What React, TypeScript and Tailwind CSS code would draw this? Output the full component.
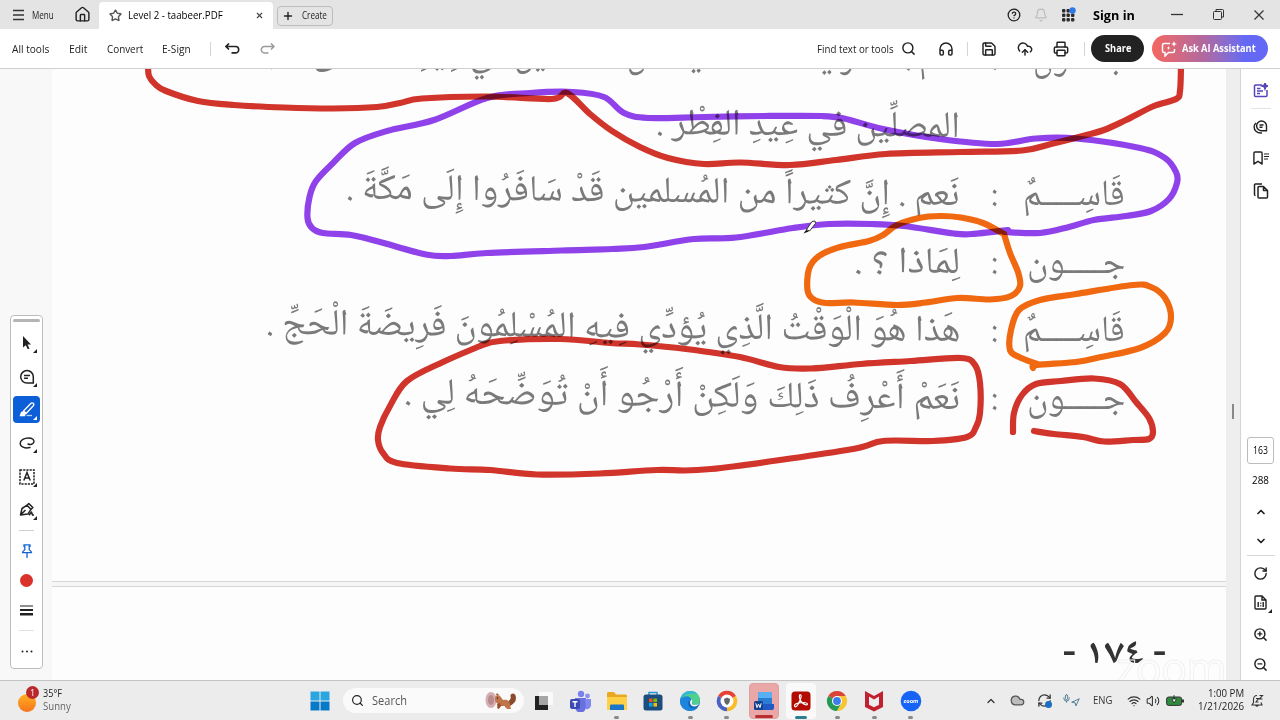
import { ReactNode, useLayoutEffect, useRef, useState } from "react";
import clsx from "clsx";
import {
  Bell,
  BookmarkIcon,
  ChevronDown,
  ChevronUp,
  CircleQuestionMark,
  Cloud,
  CloudUpload,
  Headphones,
  House,
  Mic,
  Navigation,
  Plus,
  Printer,
  RefreshCw,
  RotateCw,
  Save,
  Search,
  Star,
  Volume2,
  Wifi,
  X,
  ZoomIn,
  ZoomOut,
} from "lucide-react";

type Point = [number, number];

interface FitProps {
  className?: string;
  rtl?: boolean;
  children: ReactNode;
}

// Stretches one line of text to the width of its box.
const Fit = ({ className, rtl, children }: FitProps) => {
  const box = useRef<HTMLDivElement>(null);
  const line = useRef<HTMLSpanElement>(null);
  const [scale, setScale] = useState(1);

  useLayoutEffect(() => {
    if (box.current && line.current) {
      setScale(box.current.clientWidth / line.current.offsetWidth);
    }
  }, [children]);

  return (
    <div ref={box} dir={rtl ? "rtl" : "ltr"} className={clsx("flex shrink-0", className)}>
      <span
        ref={line}
        className={clsx("shrink-0 whitespace-nowrap", rtl ? "origin-right" : "origin-left")}
        style={{ transform: `scaleX(${scale})` }}
      >
        {children}
      </span>
    </div>
  );
};

const smooth = (pts: Point[]) => {
  let d = `M${pts[0][0]} ${pts[0][1]}`;
  for (let i = 0; i < pts.length - 1; i++) {
    const a = pts[Math.max(i - 1, 0)];
    const b = pts[i];
    const c = pts[i + 1];
    const e = pts[Math.min(i + 2, pts.length - 1)];
    d += `C${b[0] + (c[0] - a[0]) / 6} ${b[1] + (c[1] - a[1]) / 6} ${c[0] - (e[0] - b[0]) / 6} ${c[1] - (e[1] - b[1]) / 6} ${c[0]} ${c[1]}`;
  }
  return d;
};

const RED = "#d2342a";
const PURPLE = "#9142ec";
const ORANGE = "#f26a10";

const strokes: { color: string; points: Point[] }[] = [
  {
    color: RED,
    points: [
      [148, 66], [149, 76], [155, 84], [166, 91], [198, 101], [234, 105], [284, 107.5], [333, 108.5], [377, 107],
      [400, 103], [422, 98.5], [487, 96.5], [552, 99], [567, 93], [590, 114], [612, 131], [640, 147], [668, 158],
      [704, 164], [740, 162.5], [790, 165], [836, 160], [886, 154], [961, 152], [1022, 150.5], [1051, 144],
      [1079, 137], [1104, 130], [1126, 120], [1154, 106], [1176, 99], [1180, 91], [1181, 66],
    ],
  },
  {
    color: PURPLE,
    points: [
      [1008, 230], [972, 234], [954, 233.5], [904, 226], [872, 224], [829, 224], [793, 228], [736, 237.5], [694, 239],
      [644, 247], [612, 249], [562, 250.5], [487, 253], [451, 256], [426, 254.5], [380, 242], [351, 235], [323, 233],
      [312, 228], [307.5, 218], [309.5, 197], [316, 181], [333, 163], [355, 143], [387, 131], [434, 120], [487, 98],
      [530, 93], [573, 92], [604, 97], [624, 113], [648, 118], [704, 117], [765, 116], [822, 116], [844, 118.5],
      [883, 129], [940, 139], [997, 144], [1036, 138.5], [1076, 138.5], [1140, 148], [1165, 158], [1176, 172],
      [1177, 183], [1169, 199], [1151, 211], [1126, 216], [1094, 220], [1069, 227], [1040, 233], [1004, 232],
    ],
  },
  {
    color: ORANGE,
    points: [
      [1004, 234], [983, 223], [961, 217.5], [940, 216], [919, 218], [897, 225], [883, 235], [869, 241], [840, 247],
      [819, 256], [809, 269], [807.5, 290], [813, 299], [826, 303], [854, 302.5], [897, 305], [926, 302.5],
      [958, 298], [990, 299.5], [1011, 296], [1020, 286], [1018, 272], [1010, 253], [1004, 234],
    ],
  },
  {
    color: ORANGE,
    points: [
      [1037, 364], [1019, 357], [1010, 350], [1011, 330], [1019, 310], [1040, 300], [1076, 294], [1133, 285],
      [1151, 287], [1165, 298], [1171, 317], [1165, 333], [1140, 348], [1101, 357], [1076, 362], [1037, 365],
      [1033, 368],
    ],
  },
  {
    color: RED,
    points: [
      [1013, 432], [1014, 413], [1022, 395], [1036, 384], [1061, 381], [1094, 378.5], [1120, 384], [1136, 402],
      [1149, 418], [1153, 432], [1149, 439], [1133, 440], [1104, 441.5], [1083, 437], [1054, 434], [1034, 431],
    ],
  },
  {
    color: RED,
    points: [
      [480, 346], [500, 341], [560, 339], [610, 343], [640, 344.5], [686, 349], [740, 357], [779, 367], [811, 368.5],
      [861, 364], [911, 361], [961, 358], [975, 365], [980, 383], [980, 413], [976, 427], [967, 437], [933, 441],
      [883, 441], [847, 450], [711, 469], [657, 470], [600, 473.5], [537, 474.5], [490, 470], [450, 468.5],
      [397, 463], [383, 453], [378, 440], [380, 427], [390, 406], [407, 381], [443, 362], [480, 346],
    ],
  },
];

const Ink = () => (
  <svg viewBox="0 69 1240 611" className="absolute inset-0 h-[611px] w-[1240px] mix-blend-multiply" fill="none">
    {strokes.map((s, i) => (
      <path
        key={i}
        d={smooth(s.points)}
        stroke={s.color}
        strokeWidth={6.2}
        strokeLinecap="round"
        strokeLinejoin="round"
        className="mix-blend-multiply"
      />
    ))}
  </svg>
);

const Cursor = () => (
  <svg viewBox="0 0 16 16" className="absolute top-[150px] left-[802px] h-4 w-4">
    <path d="m4.500 10.500 5.500-8 3-.5.500 2.500-6 7.500z" fill="#fff" stroke="#333" strokeWidth={1} />
    <path d="m1.500 14.500 2.800-3.800 2.500 1.800z" fill="#111" />
  </svg>
);

interface Line {
  speaker?: string;
  text: string;
  width: string;
  speakerWidth?: string;
}

const lines: Line[] = [
  {
    speaker: "جـــــون",
    speakerWidth: "w-[92px]",
    text: "نَعم . لَقَدْ رأيتُ عدداً قليلاً من المُسلمين في عِيدِ الأضحى المبارك",
    width: "w-[734px]",
  },
  { text: "المصلِّين في عِيدِ الفِطْر .", width: "w-[304px]" },
  {
    speaker: "قَاسِـــــمٌ",
    speakerWidth: "w-[102px]",
    text: "نَعم . إِنَّ كثيراً من المُسلمين قَدْ سَافَرُوا إِلَى مَكَّةَ .",
    width: "w-[614px]",
  },
  { speaker: "جـــــون", speakerWidth: "w-[98px]", text: "لِمَاذا ؟ .", width: "w-[106px]" },
  {
    speaker: "قَاسِـــــمٌ",
    speakerWidth: "w-[102px]",
    text: "هَذا هُوَ الْوَقْتُ الَّذِي يُؤدِّي فِيهِ المُسْلِمُونَ فَرِيضَةَ الْحَجِّ .",
    width: "w-[694px]",
  },
  {
    speaker: "جـــــون",
    speakerWidth: "w-[98px]",
    text: "نَعَمْ أَعْرِفُ ذَلِكَ وَلَكِنْ أَرْجُو أَنْ تُوَضِّحَهُ لِي  .",
    width: "w-[556px]",
  },
];

const Manuscript = () => (
  <div className="flex h-[513px] flex-col overflow-hidden border-b border-[#d6d6d6] bg-[#fdfdfd]">
    <div
      dir="rtl"
      className="-mt-[42px] flex flex-col pr-[101px] font-['Noto_Naskh_Arabic','Amiri','Scheherazade_New','DejaVu_Sans',serif] text-[37px] leading-[68px] text-[#7a7a7a]"
    >
      {lines.map((line, i) => (
        <div key={i} className="flex h-[68px]">
          <div className="w-[127px] shrink-0">
            {line.speaker && (
              <Fit rtl className={line.speakerWidth}>
                {line.speaker}
              </Fit>
            )}
          </div>
          <div className="w-[38px] shrink-0 text-[34px]">{line.speaker && ":"}</div>
          <Fit rtl className={clsx("origin-right rotate-[0.6deg]", line.width)}>
            {line.text}
          </Fit>
        </div>
      ))}
    </div>
  </div>
);

const Divider = () => <div className="h-[14px] w-px shrink-0 bg-[#d4d4d4]" />;

const Cell = ({ className, children }: { className?: string; children?: ReactNode }) => (
  <div className={clsx("relative flex shrink-0 items-center justify-center", className)}>{children}</div>
);

const TitleBar = () => (
  <div className="flex h-[29px] items-center bg-[#e4e4e4] text-[11px] text-[#222]">
    <div className="flex w-[74px] items-center gap-2 pl-[13px]">
      <svg className="h-3 w-[11px]" stroke="#333" strokeWidth="1.4">
        <path d="M0 1.5h11M0 6h11M0 10.500h11" />
      </svg>
      <Fit className="mt-px w-[22px]">Menu</Fit>
    </div>
    <House className="h-[17px] w-[17px] text-[#222]" strokeWidth={2} />
    <div className="mt-[2px] ml-2 flex h-[27px] w-[174px] items-center rounded-t bg-white pl-[10px]">
      <Star className="h-[13px] w-[13px] text-[#555]" strokeWidth={2.6} />
      <Fit className="ml-[6px] w-[95px] text-black">Level 2 - taabeer.PDF</Fit>
      <X className="ml-[32px] h-[9px] w-[9px] text-[#444]" strokeWidth={3} />
    </div>
    <div className="mt-[2px] ml-1 flex h-[20px] w-[56px] items-center rounded border border-[#bdbdbd] pl-[4px]">
      <Plus className="h-[12px] w-[12px] text-[#222]" strokeWidth={2.8} />
      <Fit className="ml-[8px] w-[25px]">Create</Fit>
    </div>
    <div className="ml-auto flex items-center">
      <Cell className="w-[27px]">
        <CircleQuestionMark className="h-[14px] w-[14px] text-[#222]" strokeWidth={2.2} />
      </Cell>
      <Cell className="w-[27px]">
        <Bell className="h-[14px] w-[14px] text-[#bcbcbc]" />
      </Cell>
      <Cell className="w-[27px]">
        <svg className="h-4 w-4" viewBox="0 0 16 16" fill="#2b2b2b">
          {[2, 6.5, 11].map((y) =>
            [2, 6.5, 11].map((x) => <rect key={`${x}-${y}`} x={x} y={y} width="3.4" height="3.4" rx="1" />)
          )}
          <circle cx="12.5" cy="3.5" r="3.2" fill="#2c78e4" />
        </svg>
      </Cell>
      <Fit className="mt-[2px] ml-[12px] w-[42px] text-[13px] font-bold text-black">Sign in</Fit>
      <svg className="ml-[36px] h-3 w-3" stroke="#333" strokeWidth="1.3">
        <path d="M0 5.5h12" />
      </svg>
      <svg className="ml-[30px] h-[11px] w-[11px]" viewBox="0 0 11 11" fill="none" stroke="#333">
        <rect x=".5" y="2.5" width="8" height="8" rx="1" />
        <path d="M3 2V.5h6.500a1 1 0 0 1 1 1V8H9" />
      </svg>
      <svg className="mr-[16px] ml-[30px] h-[10px] w-[10px]" stroke="#333" strokeWidth="1.2">
        <path d="m.5.5 9 9m0-9-9 9" />
      </svg>
    </div>
  </div>
);

const SparkleBox = ({ className }: { className?: string }) => (
  <svg className={className} viewBox="0 0 16 16" fill="none" stroke="currentColor" strokeWidth="1.5">
    <path d="M9 2.500H3A1.500 1.500 0 0 0 1.500 4v6A1.500 1.500 0 0 0 3 11.500h1V15l3.500-3.500H12a1.500 1.500 0 0 0 1.500-1.500V8" />
    <path
      d="m13 0 .8 2.200L16 3l-2.200.8L13 6l-.8-2.200L10 3l2.200-.8zM7.500 5l.6 1.400 1.400.6-1.400.6-.6 1.400-.6-1.400L5.500 7l1.400-.6z"
      fill="currentColor"
      stroke="none"
    />
  </svg>
);

const Toolbar = () => (
  <div className="flex h-10 items-center border-b border-[#d0d0d0] bg-white pl-3 text-[11.5px] text-[#222]">
    <Fit className="w-[37px]">All tools</Fit>
    <Fit className="ml-5 w-[18px]">Edit</Fit>
    <Fit className="ml-5 w-[36px]">Convert</Fit>
    <Fit className="mr-[19px] ml-[19px] w-[29px]">E-Sign</Fit>
    <Divider />
    <svg className="ml-[14px] h-[11px] w-[15px]" viewBox="0 0 15 11" fill="none" stroke="currentColor" strokeWidth="1.6">
      <path d="M4 .5 1 3.500l3 3M1 3.500h9.500a3.200 3.200 0 0 1 0 6.400H6.500" />
    </svg>
    <svg
      className="ml-[20px] h-[11px] w-[15px] text-[#9a9a9a]"
      viewBox="0 0 15 11"
      fill="none"
      stroke="currentColor"
      strokeWidth="1.5"
    >
      <path d="m11 .5 3 3-3 3M14 3.500H4.500a3.200 3.200 0 0 0 0 6.400h4" />
    </svg>
    <div className="ml-auto flex items-center">
      <Fit className="w-[77px]">Find text or tools</Fit>
      <Search className="ml-[7px] h-[15px] w-[15px]" strokeWidth={2.3} />
      <Headphones className="ml-[22px] h-4 w-4" strokeWidth={2.2} />
      <Cell className="w-[27px]">
        <Divider />
      </Cell>
      <Save className="h-4 w-4" strokeWidth={2.2} />
      <CloudUpload className="ml-[20px] h-4 w-4" strokeWidth={2.2} />
      <Printer className="ml-[20px] h-4 w-4" strokeWidth={2.2} />
      <Cell className="w-[22px] pl-2">
        <Divider />
      </Cell>
      <div className="flex h-[27px] w-[53px] items-center justify-center rounded-full bg-[#222] text-[11px] font-bold text-white">
        <Fit className="w-[26px]">Share</Fit>
      </div>
      <div className="mr-3 ml-[8px] flex h-[27px] w-[116px] items-center rounded-full bg-linear-to-r from-[#f5665e] via-[#b0689f] via-45% to-[#6468f5] to-80% pl-[9px] text-[11px] font-bold text-white">
        <SparkleBox className="h-4 w-4" />
        <Fit className="ml-[5px] w-[74px]">Ask AI Assistant</Fit>
      </div>
    </div>
  </div>
);

const Corner = ({ white }: { white?: boolean }) => (
  <svg className="absolute right-[3px] bottom-[3px] h-1 w-1" fill={white ? "#fff" : "#222"}>
    <path d="M4 0v4H0z" />
  </svg>
);

const Palette = () => (
  <div className="absolute top-[246px] left-[10px] flex h-[354px] w-[33px] flex-col items-center rounded border border-[#bcbcbc] bg-white pt-[3px]">
    <div className="h-[3px] w-[27px] rounded-sm bg-[#b4b4b4]" />
    <Cell className="mt-[7px] h-[27px] w-[27px]">
      <svg className="h-[14px] w-[10px]" fill="#222">
        <path d="m1 0 8 8.500H5.500l2 4-1.700.8-2-4L1 11.500z" />
      </svg>
      <Corner />
    </Cell>
    <Cell className="mt-[7px] h-[27px] w-[27px]">
      <svg className="h-4 w-4" viewBox="0 0 16 16" fill="none" stroke="#222" strokeWidth="1.5">
        <path d="M8 1.500a6.300 6.300 0 1 0 0 12.600h6.300V7.800A6.300 6.300 0 0 0 8 1.500zM5 6.500h6M5 9.300h4" />
      </svg>
      <Corner />
    </Cell>
    <Cell className="mt-[6px] h-[27px] w-[27px] rounded-sm bg-[#0d5fd8]">
      <svg className="h-4 w-4" viewBox="0 0 16 16" fill="none" stroke="#fff" strokeWidth="1.3">
        <path d="m4.500 9 7.300-7.500a1.500 1.500 0 0 1 2.500 2.200L7.300 11.300z" />
        <path d="m1.500 13.500 1-3 2-.8 1.800 1.800-.8 2z" fill="#fff" />
        <path d="M7.500 13.500H13" opacity=".7" />
      </svg>
      <Corner white />
    </Cell>
    <Cell className="mt-[6px] h-[27px] w-[27px]">
      <svg className="h-4 w-4" viewBox="0 0 16 16" fill="none" stroke="#222" strokeWidth="1.4" strokeLinecap="round">
        <path d="M11 12.500C5.500 14 1.200 11.500 1.200 8.500 1.200 5 5.500 3 9.500 3s6 2 5.300 4.200c-.6 2-3.600 2.900-5.800 1.800" />
      </svg>
      <Corner />
    </Cell>
    <Cell className="mt-[7px] h-[27px] w-[27px]">
      <svg className="h-4 w-4" viewBox="0 0 16 16" fill="none" stroke="#222" strokeWidth="1.5">
        <rect x="1" y="1" width="14" height="14" strokeDasharray="2.200 1" />
        <path d="m4.800 11.500 3.200-8 3.200 8M6 9h4" />
      </svg>
      <Corner />
    </Cell>
    <Cell className="mt-[6px] h-[27px] w-[27px]">
      <svg className="h-4 w-4" viewBox="0 0 16 16" fill="none" stroke="#222" strokeWidth="1.5" strokeLinejoin="round">
        <path d="M1.500 13 3 6.500l5-3.300 4 4.200-3.200 4.700zM1.500 13l5-5M8 3.200l1.800-1.700 4 4L12 7.400M10 13.300l2.500-3.300 1 3h1.500" />
      </svg>
      <Corner />
    </Cell>
    <div className="mt-[7px] h-px w-[15px] bg-[#d0d0d0]" />
    <svg className="mt-[13px] h-[14px] w-3" viewBox="0 0 12 14" fill="none" stroke="#1565d0" strokeWidth="1.3">
      <path d="M3 .8h6v1.500H8.200v3.200c0 1 2.300 1 2.300 3.200h-9c0-2.200 2.300-2.200 2.300-3.200V2.300H3zM6 8.700V14" />
    </svg>
    <div className="mt-[16px] h-[13px] w-[13px] rounded-full bg-[#d9322a]" />
    <svg className="mt-[17px] h-3 w-[13px]" fill="#222">
      <path d="M0 1.500h13v1H0zM0 5h13v2H0zM0 9h13v2.500H0z" />
    </svg>
    <div className="mt-[14px] h-px w-[15px] bg-[#e0e0e0]" />
    <svg className="mt-[19px] h-[3px] w-3" fill="#222">
      <circle cx="1.5" cy="1.5" r="1" />
      <circle cx="6" cy="1.5" r="1" />
      <circle cx="10.5" cy="1.5" r="1" />
    </svg>
  </div>
);

const Rail = () => (
  <div className="flex w-[40px] shrink-0 flex-col items-center border-l border-[#d4d4d4] bg-white text-[#222]">
    <svg
      className="mt-[14px] h-[15px] w-[15px] text-[#5346b8]"
      viewBox="0 0 15 15"
      fill="none"
      stroke="currentColor"
      strokeWidth="1.5"
    >
      <path d="M9 2H2.500a1 1 0 0 0-1 1v9.500a1 1 0 0 0 1 1h10.500a1 1 0 0 0 1-1V7M4 5.500h3.500M4 8h6M4 10.500h3" />
      <path d="m12 0 .8 2.200L15 3l-2.200.8L12 6l-.8-2.200L9 3l2.200-.8z" fill="currentColor" />
    </svg>
    <div className="mt-[10px] h-px w-5 bg-[#e2e2e2]" />
    <svg
      className="mt-[11px] h-[14px] w-[15px]"
      viewBox="0 0 15 14"
      fill="none"
      stroke="currentColor"
      strokeWidth="1.4"
    >
      <path d="M8.500 1a4.800 4.800 0 0 0 0 9.800h5V6A5 5 0 0 0 8.500 1zM6.500 5h4M6.500 7.200h3M3 3C.5 5 .5 9 3 11.300c1.500 1.500 3.500 1.900 6 1.700" />
    </svg>
    <div className="mt-[16px] flex">
      <BookmarkIcon className="-ml-[2px] h-4 w-[14px]" strokeWidth={2.4} preserveAspectRatio="none" />
      <svg className="mt-[3px] -ml-[1px] h-[8px] w-[5px]" stroke="currentColor" strokeWidth="1.2">
        <path d="M0 1h5M0 3.500h5M0 6h4" />
      </svg>
    </div>
    <svg
      className="mt-[17px] h-4 w-4"
      viewBox="0 0 16 16"
      fill="none"
      stroke="currentColor"
      strokeWidth="1.5"
      strokeLinejoin="round"
    >
      <path d="M5 4.500a1 1 0 0 1 1-1h4.500l4 4V14a1 1 0 0 1-1 1H6a1 1 0 0 1-1-1zM10.500 3.500v4h4M2.500 12.500A1 1 0 0 1 1.500 11.500V2a1 1 0 0 1 1-1H9" />
    </svg>
    <div className="mt-[238px] flex h-[27px] w-[27px] items-center justify-center rounded-[3px] border border-[#bcbcbc]">
      <Fit className="w-[15px] text-[11px] text-black">163</Fit>
    </div>
    <Fit className="mt-[8px] w-[17px] text-[11px] text-black">288</Fit>
    <ChevronUp className="mt-[17px] h-3 w-3" strokeWidth={3.5} />
    <ChevronDown className="mt-[17px] h-3 w-3" strokeWidth={3.5} />
    <div className="mt-[8px] h-px w-7 bg-[#d8d8d8]" />
    <RotateCw className="mt-[10px] h-[15px] w-[15px]" strokeWidth={2.3} />
    <Cell className="mt-[12px] h-[20px] w-[23px]">
      <svg className="h-[15px] w-[13px]" viewBox="0 0 13 15" fill="none" stroke="currentColor" strokeWidth="1.4">
        <path d="M1 2a1 1 0 0 1 1-1h6l4 4v8a1 1 0 0 1-1 1H2a1 1 0 0 1-1-1zM8 1v4h4M4.200 7v5M9.200 7v5M6.300 8.200h1M6.300 10.800h1" />
      </svg>
      <svg className="absolute right-0 bottom-0 h-1 w-1" fill="#222">
        <path d="M4 0v4H0z" />
      </svg>
    </Cell>
    <ZoomIn className="mt-[14px] h-[15px] w-[15px]" strokeWidth={2.3} />
    <ZoomOut className="mt-[15px] h-[15px] w-[15px]" strokeWidth={2.3} />
  </div>
);

const TaskIcon = ({ active, tile, children }: { active?: string; tile?: string; children: ReactNode }) => (
  <div className={clsx("relative flex h-[36px] w-[30px] shrink-0 items-center justify-center rounded", tile)}>
    <svg className="h-[22px] w-[22px]" viewBox="0 0 22 22">
      {children}
    </svg>
    {active && <div className={clsx("absolute bottom-0 h-[3px] rounded-full", active)} />}
  </div>
);

const DOT = "w-[5px] bg-[#8a8a8a]";

const Taskbar = () => (
  <div className="flex h-10 items-center border-t border-[#c4c4c4] bg-[#ececec] text-[11px] text-[#444]">
    <div className="relative ml-[18px] h-[27px] w-[22px]">
      <div className="absolute bottom-[2px] h-[18px] w-[18px] rounded-full bg-linear-to-b from-[#ffb020] to-[#f4731c]" />
      <div className="absolute -top-[1px] left-[8px] flex h-[13px] w-[13px] items-center justify-center rounded-full bg-[#b9292b] text-[9px] text-white">
        1
      </div>
    </div>
    <div className="-mt-[3px] ml-[3px] flex w-[267px] flex-col leading-[13px]">
      <Fit className="w-[19px] text-[#222]">35°F</Fit>
      <Fit className="w-[28px] text-[#666]">Sunny</Fit>
    </div>
    <svg className="h-[20px] w-[20px]" viewBox="0 0 20 20">
      <path d="M.5.5h9v9h-9zM10.500.5h9v9h-9z" fill="#2ba5e0" />
      <path d="M.5 10.500h9v9h-9zM10.500 10.500h9v9h-9z" fill="#0878c9" />
    </svg>
    <div className="ml-[13px] flex h-[25px] w-[181px] items-center rounded-full bg-[#fafafa] pl-[8px]">
      <Search className="h-[13px] w-[13px] text-[#222]" strokeWidth={2.2} />
      <Fit className="ml-[8px] w-[35px] text-[12px] text-[#555]">Search</Fit>
      <svg className="ml-[78px] h-[19px] w-8" viewBox="0 0 32 19">
        <ellipse cx="6" cy="9" rx="5.5" ry="8" fill="#d4aeb0" />
        <ellipse cx="6" cy="9" rx="3" ry="5" fill="#b98a8e" />
        <path d="M22 14c3-2 8-4 6-9" stroke="#8a4a2e" strokeWidth="5" fill="none" strokeLinecap="round" />
        <path d="M10 8c0-4 3-5 5-3l3 4c4-1 7 1 7 5l1 4h-4l-2-3h-4l-2 3-2-1 1-4c-2-1-3-3-3-5z" fill="#c0764a" />
        <path d="m11 4 1-2 2 2zM12 13l3-1 1 3-3 3z" fill="#96522f" />
        <circle cx="12.5" cy="7" r=".7" fill="#222" />
      </svg>
    </div>
    <div className="ml-[4px] flex gap-[6.8px]">
      <TaskIcon>
        <path d="M7 2h14v13H7z" fill="#fafafa" />
        <path d="M3 6h4v9h9v5H3z" fill="#222" />
        <path d="M7 6h9v9H7z" fill="#a6a6a6" />
      </TaskIcon>
      <TaskIcon>
        <circle cx="12" cy="4" r="3.2" fill="#7b83eb" />
        <circle cx="18.5" cy="6" r="2.4" fill="#8b91ef" />
        <path d="M6 8h11v9a5 5 0 0 1-11 0z" fill="#6a6fe0" />
        <path d="M16 9h6v6a4 4 0 0 1-5 4z" fill="#8289ee" />
        <rect x="1" y="9" width="10" height="10" rx="2" fill="#3b49b5" />
        <path d="M3.500 11.700h5M6 11.700V17" stroke="#fff" strokeWidth="1.4" />
      </TaskIcon>
      <TaskIcon active={DOT}>
        <path d="M1 3.500C1 2 2 2 3 2h5l2 2.500h9.500a1.500 1.500 0 0 1 1.500 1.500v14H1z" fill="#e9a820" />
        <path d="M1 7h20v13H1z" fill="#ffcf45" />
        <path d="M4 15.500a1 1 0 0 1 1-1h12a1 1 0 0 1 1 1V20H4z" fill="#1976c8" />
      </TaskIcon>
      <TaskIcon>
        <path d="M7 5V2.500h8V5" stroke="#2493d1" strokeWidth="1.5" fill="none" />
        <rect x="1.5" y="4.5" width="19" height="16" rx="2.5" fill="#1b4d7e" />
        <path d="M7 8.500h3.600v3.600H7z" fill="#f25022" />
        <path d="M11.400 8.500H15v3.600h-3.600z" fill="#7fba00" />
        <path d="M7 13h3.600v3.600H7z" fill="#00a4ef" />
        <path d="M11.400 13H15v3.600h-3.600z" fill="#ffb900" />
      </TaskIcon>
      <TaskIcon active={DOT}>
        <circle cx="11" cy="11" r="10" fill="#1265b8" />
        <path d="M1.200 10C2 4.500 6.500 1 11.500 1c5.500 0 9.500 4.500 9.500 9 0 3-2.300 5-5.500 5-2 0-2.800-.8-2.300-1.800C15 10 9 4.500 1.200 10z" fill="#4fd08c" />
        <path d="M1.200 10C2 4.500 6.500 1 11.500 1c3 0 5.500 1.300 7 3C13 2.500 5 4 1.200 10z" fill="#35b8d8" />
        <path d="M1.300 9C5 5 12.500 5.500 12 10c-2.500.5-3.500 3-2.500 5.500 1.200 3 5 4 9.500 2C16 21 11.500 21.500 8 20.500 3 19 .3 14 1.300 9z" fill="#1c86dc" />
        <path d="M12.500 9.500c1.500 1.500.8 2.800.5 3.600-.4 1.200 1 1.900 2.500 1.900 2 0 3.800-.8 4.800-2-.5 2-2.800 3.800-5.300 3.500-3.500-.3-5.500-4.500-2.500-7z" fill="#eef5f7" />
      </TaskIcon>
      <TaskIcon active={DOT}>
        <path d="M11 11 2 6a10.300 10.300 0 0 1 18 0z" fill="#e84235" />
        <path d="M11 11 20 6a10.300 10.300 0 0 1-9 15.300z" fill="#fbbc28" />
        <path d="M11 11v10.300A10.300 10.300 0 0 1 2 6z" fill="#4a62c4" />
        <circle cx="11" cy="11" r="6.5" fill="#fff" />
        <path d="M11 7.500 14 9c0 3-1 5-3 6-2-1-3-3-3-6z" fill="#666" />
      </TaskIcon>
      <TaskIcon tile="bg-[#e9a7a7] border border-[#dfa0a0]" active="w-[18px] bg-[#b92e2e]">
        <rect x="5" y="2" width="14" height="18" rx="2" fill="#2b7cd3" />
        <path d="M5 4a2 2 0 0 1 2-2h10a2 2 0 0 1 2 2v4H5z" fill="#58b0f2" />
        <path d="M5 14h16v4a2 2 0 0 1-2 2H5z" fill="#2159c4" />
        <rect x="1" y="11" width="9" height="9" rx="1.5" fill="#153f8f" />
        <path d="m2.800 13.300 1.200 4.300 1.500-3.500 1.500 3.500 1.200-4.300" stroke="#fff" fill="none" />
      </TaskIcon>
      <TaskIcon tile="bg-[#f9f9f9]" active="w-[12px] bg-[#2f7f92]">
        <rect x="1.5" y="1.5" width="19" height="19" rx="3.5" fill="#b30b00" />
        <path
          d="M4.500 15.800c0-1.500 3.500-2.800 7-3.100 3-.3 6 0 6 1.400 0 1.700-3.500.5-5.500-1.600-2-2-3-5.500-2.500-7 .4-1.200 1.800-1 1.700.8C11 9 7.500 16.800 5.500 16.800c-.6 0-1-.4-1-1z"
          stroke="#fff"
          strokeWidth="1.2"
          fill="none"
        />
      </TaskIcon>
      <TaskIcon active={DOT}>
        <path d="M11 11 2.300 6A10 10 0 0 1 19.700 6z" fill="#dc4437" />
        <path d="M2.300 6A10 10 0 0 0 11 21l4.300-7.500L11 11z" fill="#239a56" />
        <path d="M19.700 6A10 10 0 0 1 11 21l4.300-7.500L11 6z" fill="#f9c431" />
        <circle cx="11" cy="11" r="5" fill="#fff" />
        <circle cx="11" cy="11" r="3.9" fill="#3b7ded" />
      </TaskIcon>
      <TaskIcon active={DOT}>
        <path d="m2 1 9 5 9-5v16l-9 4.500L2 17z" fill="#c0202f" />
        <path d="m6 6.500 5 3 5-3v8.300l-5 2.500-5-2.500z" fill="#ececec" />
      </TaskIcon>
      <TaskIcon active={DOT}>
        <circle cx="11" cy="11" r="10.3" fill="#1664f5" />
        <text x="11" y="13" textAnchor="middle" fontSize="5.5" fontWeight="700" fill="#fff">
          zoom
        </text>
      </TaskIcon>
    </div>
    <div className="ml-auto flex items-center">
      <ChevronUp className="h-[12px] w-[12px] text-[#333]" strokeWidth={2.5} />
      <Cloud className="ml-[13px] h-[15px] w-[15px] fill-[#bdbdbd] text-[#555]" />
      <Cell className="ml-[12px] h-[15px] w-[15px]">
        <RefreshCw className="h-[15px] w-[15px] text-[#333]" strokeWidth={2} />
        <div className="absolute right-0 bottom-0 h-[7px] w-[7px] rounded-full bg-[#1a6fc4]" />
      </Cell>
      <Mic className="ml-[10px] h-[11px] w-[9px] -translate-y-[2px] text-[#4b7890]" strokeWidth={2.5} />
      <Navigation className="h-[9px] w-[9px] translate-y-[2px] text-[#4b7890]" strokeWidth={2.5} />
      <Fit className="ml-[13px] w-[19px] text-[#333]">ENG</Fit>
      <Wifi className="ml-[15px] h-[14px] w-[14px] text-[#333]" strokeWidth={2} />
      <Volume2 className="ml-[5px] h-[14px] w-[14px] text-[#333]" strokeWidth={1.8} />
      <svg className="ml-[6px] h-[11px] w-[18px]" viewBox="0 0 18 11">
        <rect x=".6" y="2" width="15" height="8.4" rx="2" fill="#2f8a3e" stroke="#333" />
        <path d="M16 4.500h2v3h-2z" fill="#333" />
        <path d="M8 0v4M6 4h4.500L8 8z" stroke="#222" fill="#fff" strokeWidth=".8" />
      </svg>
      <div className="-mt-[3px] ml-[12px] flex w-[48px] flex-col items-end leading-[13px] text-[#222]">
        <Fit className="w-[36px]">1:00 PM</Fit>
        <Fit className="w-[46px]">1/21/2026</Fit>
      </div>
      <Cell className="mr-[16px] ml-[7px] w-[13px]">
        <svg className="h-[14px] w-[13px]" viewBox="0 0 13 14" fill="none" stroke="#333" strokeWidth="1.1">
          <path d="M6 1.500C3.500 1.500 2.500 3.500 2.500 5.500v3L1 11h10l-1-2.500M4.500 11c.3 1.500 2.700 1.500 3 0M5 4.500h2.500L5 8h2.500M8.500 1.500h3l-3 3.500h3" />
        </svg>
      </Cell>
    </div>
  </div>
);

export default function App() {
  return (
    <div className="flex h-[720px] w-[1280px] flex-col overflow-hidden bg-white font-['Open_Sans','Noto_Sans',sans-serif]">
      <TitleBar />
      <Toolbar />
      <div className="relative flex h-[611px] overflow-hidden">
        <div className="w-[52px] shrink-0 bg-[#f8f8f8]" />
        <div className="flex w-[1174px] shrink-0 flex-col">
          <Manuscript />
          <div className="h-[4px] bg-[#f6f6f6]" />
          <div className="relative flex flex-1 flex-col border-t border-[#d6d6d6] bg-[#fdfdfd]">
            <div
              dir="rtl"
              className="mt-[47px] mr-[60px] flex h-[44px] items-center font-['Noto_Naskh_Arabic','Amiri','DejaVu_Sans',serif] text-[34px] font-bold text-[#333]"
            >
              <Fit rtl className="w-[103px]">
                - ١٧٤ -
              </Fit>
            </div>
            <div className="absolute right-0 bottom-0 h-[32px] overflow-hidden">
              <div className="text-[44px] leading-[38px] tracking-tight text-transparent [-webkit-text-stroke:1px_#f1f1f1]">
                zoom
              </div>
            </div>
          </div>
        </div>
        <div className="w-[14px] shrink-0 bg-[#eeeeee] pt-[335px]">
          <div className="ml-[6px] h-[15px] w-[2px] bg-[#888]" />
        </div>
        <Rail />
        <Ink />
        <Cursor />
        <Palette />
      </div>
      <Taskbar />
    </div>
  );
}
